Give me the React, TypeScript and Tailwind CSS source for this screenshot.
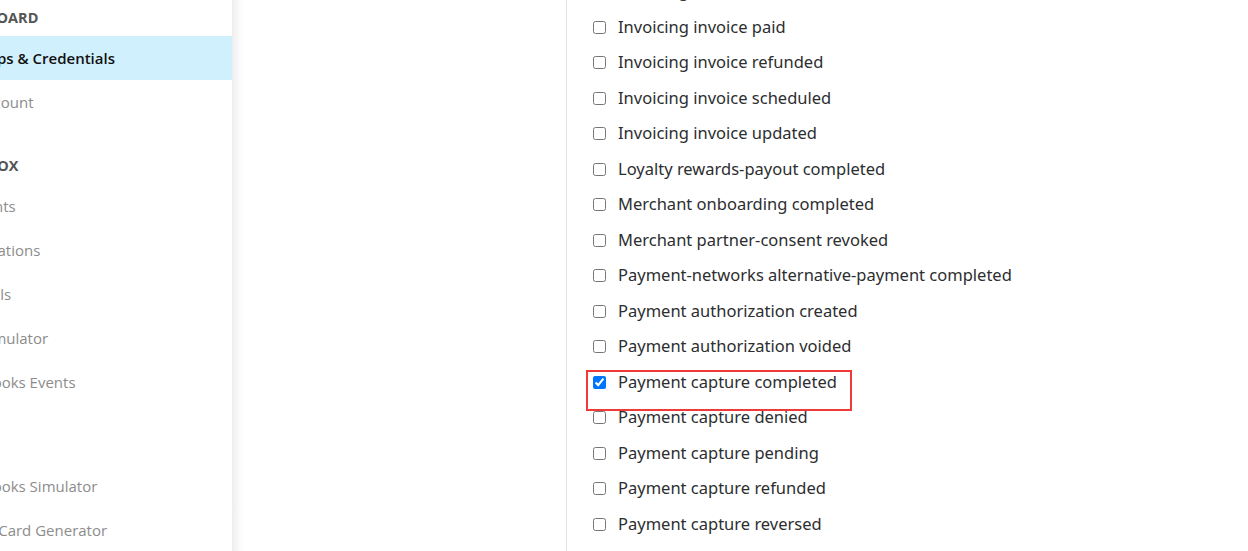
import React from "react";

type SideItem = { kind: "head" | "item" | "active"; label: string };

const side: SideItem[] = [
  { kind: "head", label: "DASHBOARD" },
  { kind: "active", label: "My Apps & Credentials" },
  { kind: "item", label: "My Account" },
  { kind: "head", label: "SANDBOX" },
  { kind: "item", label: "Accounts" },
  { kind: "item", label: "Notifications" },
  { kind: "item", label: "API Calls" },
  { kind: "item", label: "IPN Simulator" },
  { kind: "item", label: "Webhooks Events" },
  { kind: "head", label: "MOCK" },
  { kind: "item", label: "Webhooks Simulator" },
  { kind: "item", label: "Credit Card Generator" },
];

const events = [
  "Invoicing invoice created",
  "Invoicing invoice paid",
  "Invoicing invoice refunded",
  "Invoicing invoice scheduled",
  "Invoicing invoice updated",
  "Loyalty rewards-payout completed",
  "Merchant onboarding completed",
  "Merchant partner-consent revoked",
  "Payment-networks alternative-payment completed",
  "Payment authorization created",
  "Payment authorization voided",
  "Payment capture completed",
  "Payment capture denied",
  "Payment capture pending",
  "Payment capture refunded",
  "Payment capture reversed",
  "Payment order cancelled",
];

export default function App() {
  return (
    <div className="flex h-[551px] w-[1248px] overflow-hidden bg-white">
      <aside
        className="relative w-[232px] shrink-0 overflow-hidden bg-white"
        style={{ fontFamily: '"Open Sans", "Noto Sans", sans-serif' }}
      >
        <div className="-mt-[24px] -ml-[48px] flex flex-col">
          {side.map((s, i) => {
            if (s.kind === "head")
              return (
                <div
                  key={i}
                  className="-ml-[5px] flex h-[60px] items-end pb-[7px] text-[14.5px] font-bold leading-[22px] whitespace-nowrap text-[#555555]"
                >
                  {s.label}
                </div>
              );
            if (s.kind === "active")
              return (
                <div
                  key={i}
                  className="flex h-[44px] items-center bg-[#d1f0fe] text-[15px] font-semibold whitespace-nowrap text-[#111]"
                >
                  {s.label}
                </div>
              );
            return (
              <div
                key={i}
                className="flex h-[44px] items-center text-[15px] whitespace-nowrap text-[#8c8c8c]"
              >
                {s.label}
              </div>
            );
          })}
        </div>
      </aside>
      <div className="w-[11px] shrink-0 bg-gradient-to-r from-[#eeeeee] to-white" />
      <main className="flex-1">
        <div className="ml-[323px] flex h-full flex-col border-l border-[#e3e3e3]">
          <ul
            className="-mt-[26px] pl-[26px] text-[16.5px] text-[#2c2e2f]"
            style={{ fontFamily: '"Noto Sans", sans-serif' }}
          >
            {events.map((e) => {
              const checked = e === "Payment capture completed";
              return (
                <li key={e} className="relative flex h-[35.5px] items-center">
                  <input
                    type="checkbox"
                    defaultChecked={checked}
                    className="m-0 h-[13px] w-[13px] shrink-0"
                  />
                  <span className="ml-[12px] whitespace-nowrap">{e}</span>
                  {checked && (
                    <div className="pointer-events-none absolute left-[-7px] top-[5px] h-[41px] w-[266px] border-2 border-[#f03a3a]" />
                  )}
                </li>
              );
            })}
          </ul>
        </div>
      </main>
    </div>
  );
}
